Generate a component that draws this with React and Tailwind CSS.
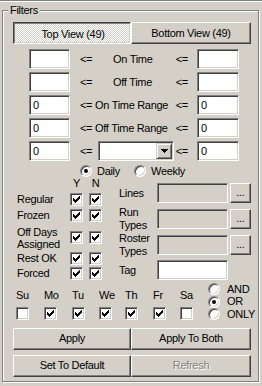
import React from "react";

const sunken =
  "border border-t-[#808080] border-l-[#808080] border-b-white border-r-white shadow-[inset_1px_1px_0_#404040,inset_-1px_-1px_0_#d4d0c8]";

function CB({ checked = true }) {
  return (
    <div className={"w-[13px] h-[13px] bg-white flex items-center justify-center shrink-0 " + sunken}>
      {checked && (
        <svg width="7" height="7" viewBox="0 0 7 7" shapeRendering="crispEdges">
          <path
            d="M0 2h1v3H0zM1 3h1v3H1zM2 4h1v3H2zM3 3h1v3H3zM4 2h1v3H4zM5 1h1v3H5zM6 0h1v3H6z"
            fill="#000"
          />
        </svg>
      )}
    </div>
  );
}

function Radio({ on }) {
  return (
    <div className={"w-[12px] h-[12px] rounded-full bg-white flex items-center justify-center shrink-0 " + sunken}>
      {on && <div className="w-[4px] h-[4px] rounded-full bg-black" />}
    </div>
  );
}

function Field({ w, value, white = true }) {
  return (
    <div
      className={
        w +
        " h-[20px] flex items-center pl-[3px] shrink-0 " +
        (white ? "bg-white " : "bg-[#d4d0c8] ") +
        sunken
      }
    >
      {value}
    </div>
  );
}

function Btn({ w, children, disabled }) {
  return (
    <div
      className={
        w +
        " h-[22px] shrink-0 flex items-center justify-center border border-t-white border-l-white border-b-[#404040] border-r-[#404040] shadow-[inset_-1px_-1px_0_#808080]"
      }
    >
      {disabled ? (
        <span className="text-[#808080] [text-shadow:1px_1px_0_#fff]">{children}</span>
      ) : (
        <span>{children}</span>
      )}
    </div>
  );
}

function SmallBtn() {
  return (
    <div className="w-[21px] h-[20px] shrink-0 flex items-center justify-center border border-t-white border-l-white border-b-[#404040] border-r-[#404040] shadow-[inset_-1px_-1px_0_#808080] pb-[2px]">
      ...
    </div>
  );
}

function Arrow() {
  return (
    <div className="w-[16px] h-[16px] flex items-center justify-center bg-[#d4d0c8] border border-t-[#d4d0c8] border-l-[#d4d0c8] border-b-[#404040] border-r-[#404040] shadow-[inset_1px_1px_0_#fff,inset_-1px_-1px_0_#808080]">
      <svg width="7" height="4" viewBox="0 0 7 4" shapeRendering="crispEdges">
        <path d="M0 0h7v1H0zM1 1h5v1H1zM2 2h3v1H2zM3 3h1v1H3z" fill="#000" />
      </svg>
    </div>
  );
}

function RangeRow({ left, right, children }) {
  return (
    <div className="flex items-center h-[20px]">
      <div className="ml-[16px]">
        <Field w="w-[41px]" value={left} />
      </div>
      <div className="w-[127px] flex items-center whitespace-nowrap">{children}</div>
      <Field w="w-[42px]" value={right} />
    </div>
  );
}

export default function App() {
  const days = [
    ["Su", false, "w-[28px]"],
    ["Mo", true, "w-[28px]"],
    ["Tu", true, "w-[27px]"],
    ["We", true, "w-[26px]"],
    ["Th", true, "w-[28px]"],
    ["Fr", true, "w-[27px]"],
    ["Sa", false, "w-[13px]"],
  ];
  const flags = [
    ["Regular", "h-[16px]"],
    ["Frozen", "h-[17px]"],
    [
      <div className="leading-[12px]">
        <div>Off Days</div>
        <div>Assigned</div>
      </div>,
      "h-[27px]",
    ],
    ["Rest OK", "h-[14px]"],
    ["Forced", "h-[17px]"],
  ];
  return (
    <div className="w-[262px] h-[386px] bg-[#d4d0c8] font-['Liberation_Sans',Arial,sans-serif] text-[11px] tracking-[-0.3px] text-black leading-[13px] overflow-hidden border-t border-t-[#808080] shadow-[inset_0_1px_0_#fff] select-none">
      <div className="ml-[2px] mt-[9px] w-[257px] h-[372px] relative border border-[#808080] shadow-[inset_1px_1px_0_#fff,1px_1px_0_#fff]">
        <div className="absolute left-[5px] top-[-7px] px-[2px] bg-[#d4d0c8]">Filters</div>
        <div className="flex flex-col pl-[10px] pt-[11px]">
          {/* view toggle */}
          <div className="flex">
            <div className="w-[118px] h-[22px] flex items-center justify-center pt-[2px] pl-[2px] border border-t-[#404040] border-l-[#404040] border-b-white border-r-white shadow-[inset_1px_1px_0_#808080,inset_-1px_-1px_0_#d4d0c8] bg-[image:repeating-conic-gradient(#fff_0%_25%,#d4d0c8_0%_50%)] bg-[length:2px_2px]">
              Top View (49)
            </div>
            <Btn w="w-[120px]">Bottom View (49)</Btn>
          </div>

          {/* ranges */}
          <div className="mt-[5px] flex flex-col gap-[3px]">
            <RangeRow left="" right="">
              <span className="ml-[10px] w-[33px]">&lt;=</span>
              <span>On Time</span>
              <span className="ml-auto mr-[9px]">&lt;=</span>
            </RangeRow>
            <RangeRow left="" right="">
              <span className="ml-[10px] w-[33px]">&lt;=</span>
              <span>Off Time</span>
              <span className="ml-auto mr-[9px]">&lt;=</span>
            </RangeRow>
            <RangeRow left="0" right="0">
              <span className="ml-[10px]">&lt;= On Time Range</span>
              <span className="ml-auto mr-[9px]">&lt;=</span>
            </RangeRow>
            <RangeRow left="0" right="0">
              <span className="ml-[10px]">&lt;= Off Time Range</span>
              <span className="ml-auto mr-[9px]">&lt;=</span>
            </RangeRow>
            <RangeRow left="0" right="0">
              <span className="ml-[10px] w-[18px]">&lt;=</span>
              <div className={"w-[76px] h-[20px] bg-white flex justify-end items-start pt-[1px] pr-[1px] " + sunken}>
                <Arrow />
              </div>
              <span className="ml-auto mr-[9px]">&lt;=</span>
            </RangeRow>
          </div>

          {/* daily / weekly */}
          <div className="mt-[4px] h-[12px] flex items-center">
            <div className="ml-[67px] w-[54px] flex items-center gap-[5px]">
              <Radio on />
              <span>Daily</span>
            </div>
            <div className="flex items-center gap-[5px]">
              <Radio />
              <span>Weekly</span>
            </div>
          </div>

          {/* flags + lists */}
          <div className="flex items-start">
            <div className="ml-[4px] w-[102px] flex flex-col">
              <div className="h-[12px] flex items-center">
                <span className="w-[53px]" />
                <span className="w-[13px] text-center">Y</span>
                <span className="ml-[6px] w-[13px] text-center">N</span>
              </div>
              <div className="mt-[2px] flex flex-col">
                {flags.map(([label, h], i) => (
                  <div key={i} className={h + " flex items-center"}>
                    <div className="w-[53px]">{label}</div>
                    <CB />
                    <div className="ml-[6px]">
                      <CB />
                    </div>
                  </div>
                ))}
              </div>
            </div>
            <div className="mt-[6px] flex flex-col">
              <div className="flex items-center h-[20px]">
                <div className="w-[38px]">Lines</div>
                <Field w="w-[71px]" white={false} />
                <div className="ml-[2px]">
                  <SmallBtn />
                </div>
              </div>
              <div className="mt-[6px] flex items-center h-[20px]">
                <div className="w-[38px] leading-[13px]">
                  <div>Run</div>
                  <div>Types</div>
                </div>
                <Field w="w-[71px]" white={false} />
                <div className="ml-[2px]">
                  <SmallBtn />
                </div>
              </div>
              <div className="mt-[6px] flex items-center h-[20px]">
                <div className="w-[38px] leading-[13px]">
                  <div>Roster</div>
                  <div>Types</div>
                </div>
                <Field w="w-[71px]" white={false} />
                <div className="ml-[2px]">
                  <SmallBtn />
                </div>
              </div>
              <div className="mt-[5px] flex items-center h-[20px]">
                <div className="w-[38px]">Tag</div>
                <Field w="w-[71px]" />
              </div>
            </div>
          </div>

          {/* days */}
          <div className="mt-[1px] flex items-start">
            <div className="ml-[3px] mt-[6px] flex">
              {days.map(([d, c, w]) => (
                <div key={d} className={w + " flex flex-col"}>
                  <div className="h-[12px] flex items-center">{d}</div>
                  <div className="mt-[6px]">
                    <CB checked={c} />
                  </div>
                </div>
              ))}
            </div>
            <div className="ml-[15px] flex flex-col">
              {[
                ["AND", false],
                ["OR", true],
                ["ONLY", false],
              ].map(([t, on]) => (
                <div key={t} className="h-[12.5px] flex items-center gap-[7px]">
                  <Radio on={on} />
                  <span>{t}</span>
                </div>
              ))}
            </div>
          </div>

          {/* buttons */}
          <div className="mt-[7px] flex">
            <Btn w="w-[118px]">Apply</Btn>
            <Btn w="w-[120px]">Apply To Both</Btn>
          </div>
          <div className="mt-[5px] flex">
            <Btn w="w-[118px]">Set To Default</Btn>
            <Btn w="w-[120px]" disabled>
              Refresh
            </Btn>
          </div>
        </div>
      </div>
    </div>
  );
}
